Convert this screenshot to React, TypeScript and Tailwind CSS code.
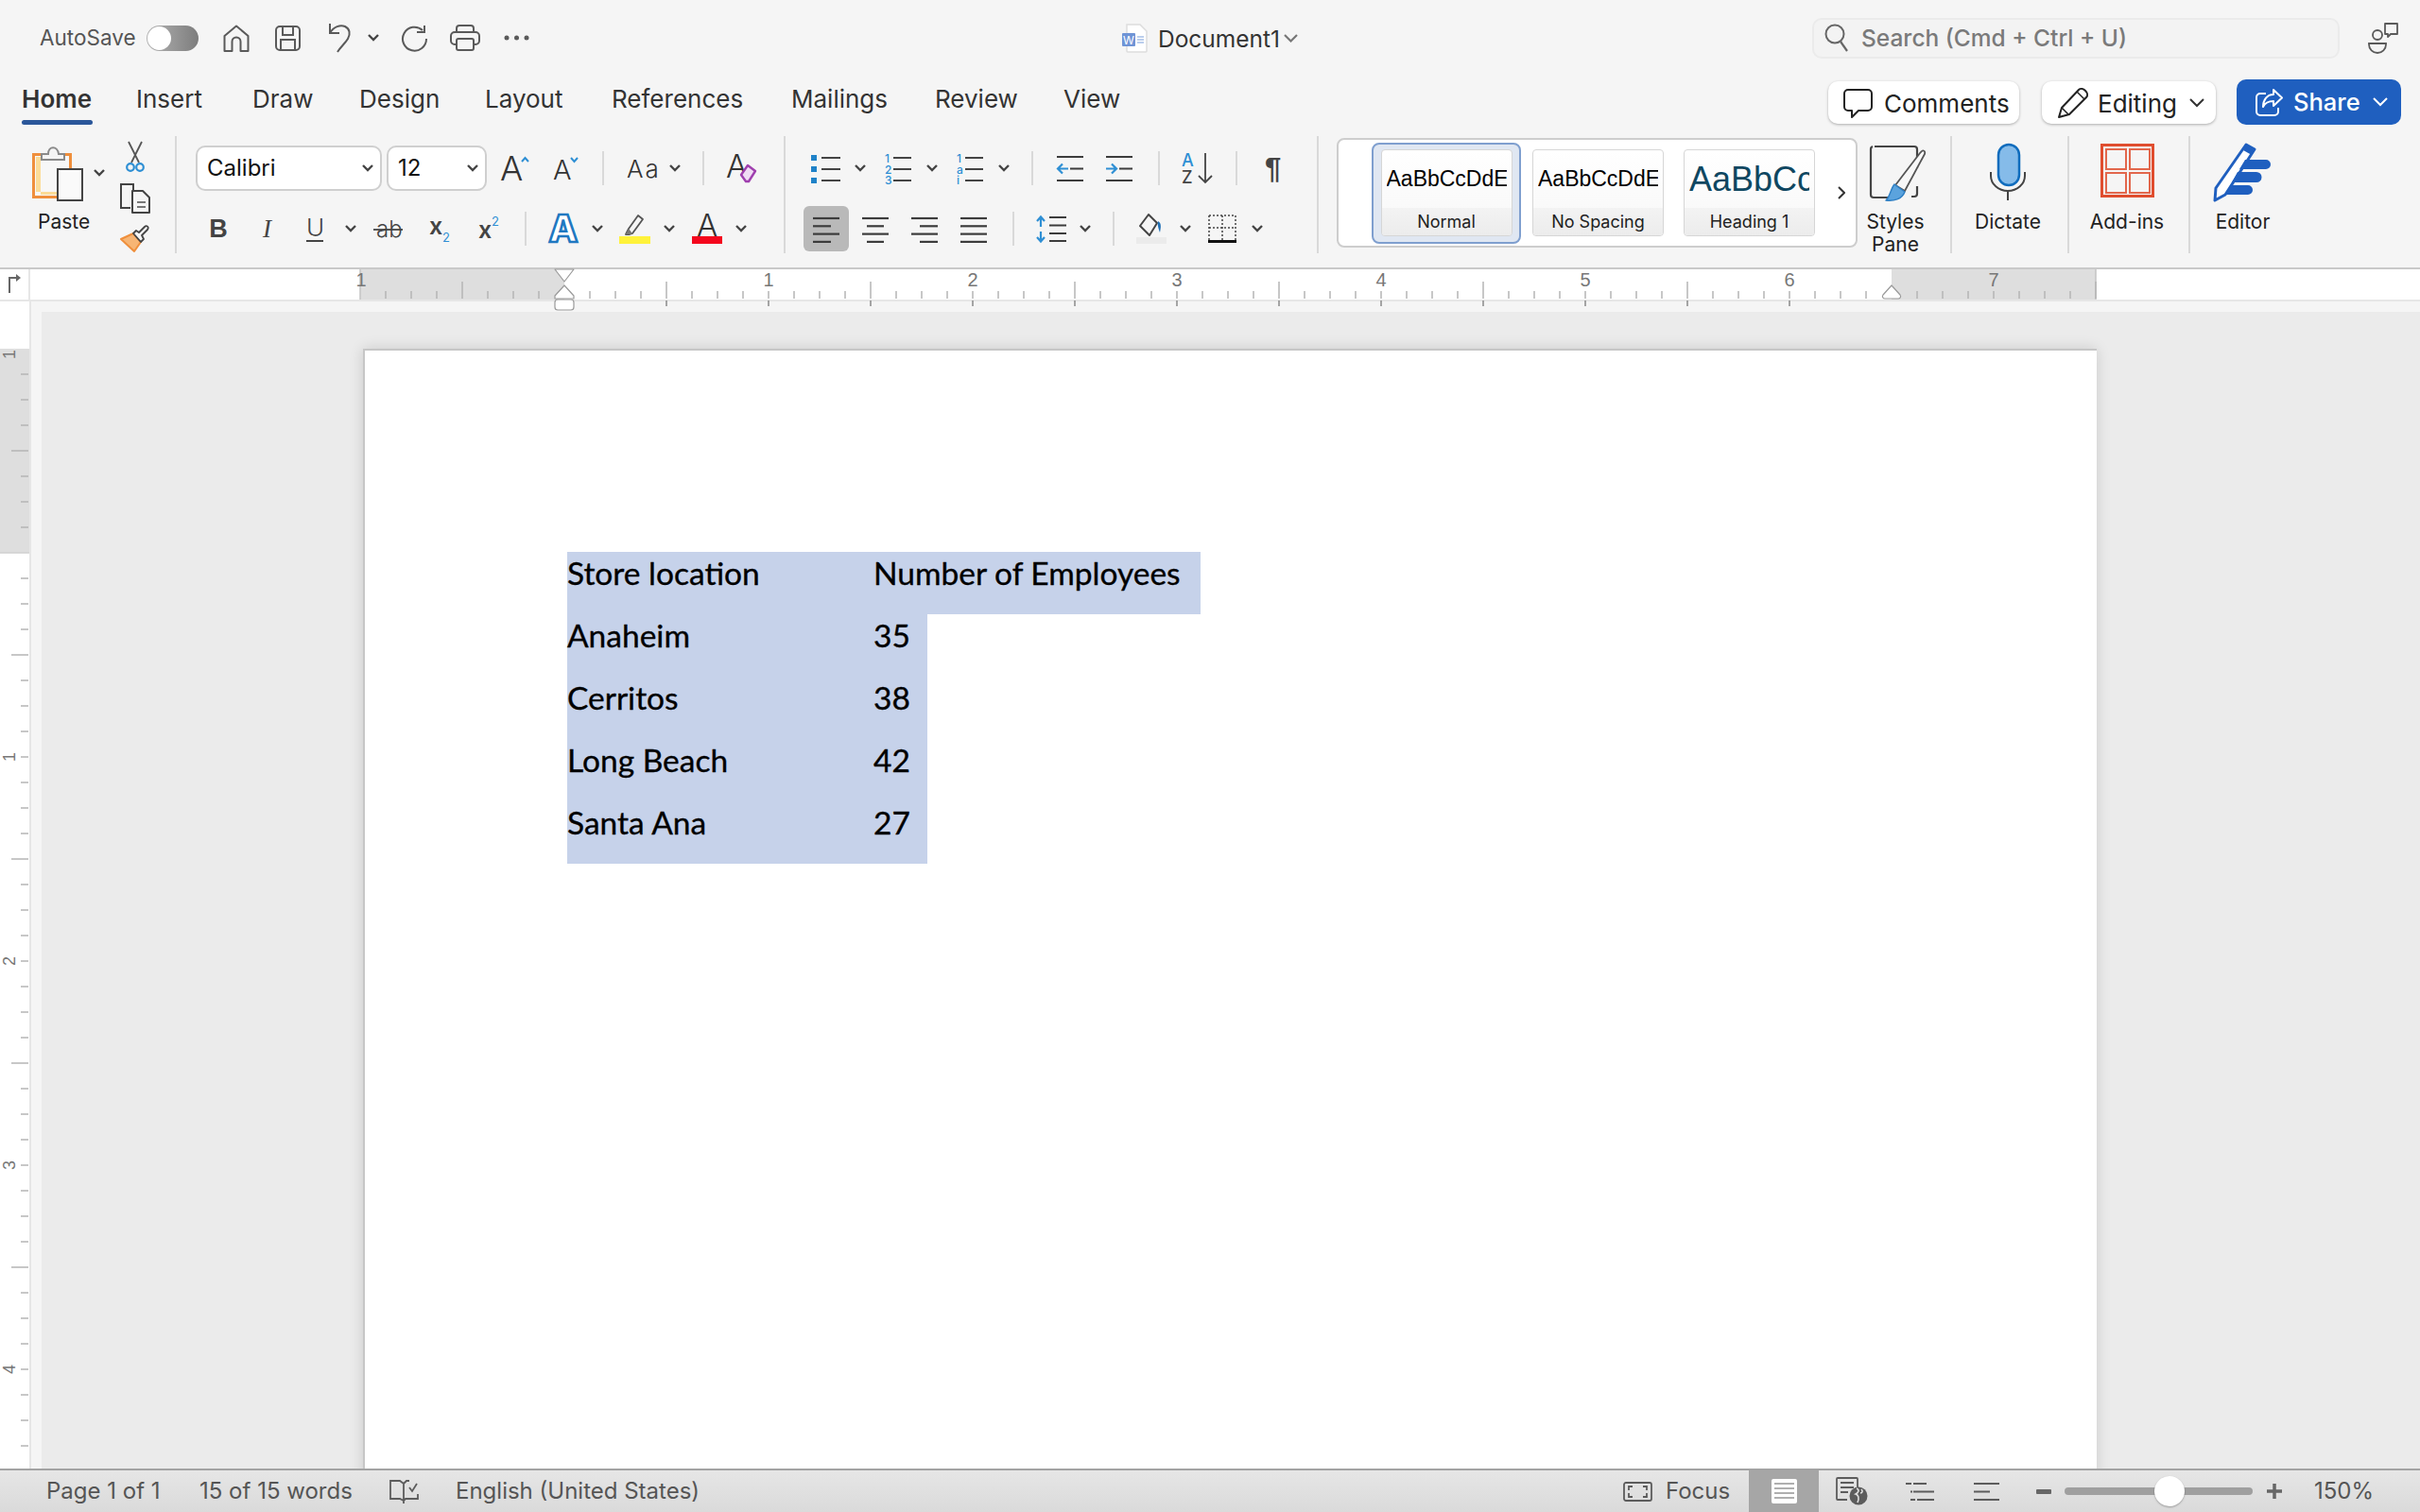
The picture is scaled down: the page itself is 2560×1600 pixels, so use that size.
import type { ReactNode } from "react";

const INK = "#444444";
const BLUE = "#2e8fd4";

function Chev({ className = "" }: { className?: string }) {
  return (
    <svg width="12" height="8" viewBox="0 0 12 8" className={`shrink-0 ${className}`} fill="none" stroke={INK} strokeWidth="2.4">
      <path d="M1 1l5 5 5-5" />
    </svg>
  );
}

function Sep({ className = "" }: { className?: string }) {
  return <div className={`w-[2px] h-[36px] bg-[#d9d9d9] shrink-0 ${className}`} />;
}

function GroupLine() {
  return <div className="w-[2px] h-[124px] bg-[#d9d9d9] shrink-0" />;
}

function Icon({ w, h, className = "", children }: { w: number; h: number; className?: string; children: ReactNode }) {
  return (
    <svg width={w} height={h} viewBox={`0 0 ${w} ${h}`} fill="none" className={`shrink-0 overflow-visible ${className}`}>
      {children}
    </svg>
  );
}

function AlignIcon({ rows, className = "" }: { rows: [number, number][]; className?: string }) {
  return (
    <Icon w={28} h={27} className={className}>
      {rows.map(([a, b], i) => (
        <path key={i} d={`M${a} ${2 + i * 8.3}H${b}`} stroke="#3c3c3c" strokeWidth="2.2" />
      ))}
    </Icon>
  );
}

function TitleBar() {
  const c = "#5a5a5a";
  return (
    <div className="h-[80px] flex items-center shrink-0">
      <span className="ml-[42px] w-[101px] text-[22.5px] text-[#555555] whitespace-nowrap">AutoSave</span>
      <div className="ml-[12px] w-[55px] h-[27px] rounded-full bg-gradient-to-r from-[#b5b5b5] to-[#7d7d7d] flex items-center shrink-0 pl-[1px]">
        <div className="w-[25px] h-[25px] rounded-full bg-white" />
      </div>
      <Icon w={28} h={29} className="ml-[26px]">
        <path d="M1.5 28V12L14 1.5 26.500 12V28H18.500V18a4.500 4.500 0 0 0-9 0V28Z" stroke={c} strokeWidth="2" strokeLinejoin="round" />
      </Icon>
      <Icon w={27} h={27} className="ml-[27px]">
        <path d="M1 5a4 4 0 0 1 4-4h17a4 4 0 0 1 4 4v17a4 4 0 0 1-4 4H5a4 4 0 0 1-4-4Z" stroke={c} strokeWidth="2" />
        <path d="M8 1v9h11V1M6 26V15h15v11" stroke={c} strokeWidth="2" />
      </Icon>
      <Icon w={25} h={32} className="ml-[29px]">
        <path d="M2 1v10h10" stroke={c} strokeWidth="2" />
        <path d="M2 11C6 4 13 2 18 4c5 2.500 6 8 3 13-3 5-8 9-11 14" stroke={c} strokeWidth="2" />
      </Icon>
      <Chev className="ml-[17px]" />
      <Icon w={30} h={27} className="ml-[22px]">
        <path d="M24 5A12.500 12.500 0 1 0 28 14" stroke={c} strokeWidth="2" />
        <path d="M26 0v7h-8" stroke={c} strokeWidth="2" />
      </Icon>
      <Icon w={32} h={28} className="ml-[23px]">
        <path d="M7 8V4a3 3 0 0 1 3-3h12a3 3 0 0 1 3 3v4" stroke={c} strokeWidth="2" />
        <path d="M7 21H5a4 4 0 0 1-4-4v-5a4 4 0 0 1 4-4h22a4 4 0 0 1 4 4v5a4 4 0 0 1-4 4h-2" stroke={c} strokeWidth="2" />
        <rect x="7" y="15" width="18" height="12" rx="2" stroke={c} strokeWidth="2" />
      </Icon>
      <Icon w={27} h={6} className="ml-[25px]">
        <circle cx="3" cy="3" r="2.500" fill={c} />
        <circle cx="13.500" cy="3" r="2.500" fill={c} />
        <circle cx="24" cy="3" r="2.500" fill={c} />
      </Icon>
      <Icon w={27} h={31} className="ml-[627px]">
        <path d="M5 1h14l7 7v21a1 1 0 0 1-1 1H6a1 1 0 0 1-1-1Z" fill="#ffffff" stroke="#dddddd" strokeWidth="1.500" />
        <rect x="0" y="10" width="14" height="14" rx="1" fill="#6f94d6" />
        <text x="7" y="21.500" textAnchor="middle" fontSize="12" fill="#ffffff">W</text>
        <path d="M16 14h7M16 17h7M16 20h7" stroke="#7ba0dc" strokeWidth="1.200" />
      </Icon>
      <span className="ml-[11px] mt-[2px] w-[125px] text-[24.5px] text-[#333333] whitespace-nowrap">Document1</span>
      <svg width="15" height="9" viewBox="0 0 15 9" fill="none" stroke="#777777" strokeWidth="2.200" className="ml-[8px] shrink-0">
        <path d="M1 1l6.500 6.500L14 1" />
      </svg>
      <div className="ml-[544px] w-[558px] h-[43px] rounded-[10px] bg-[#f3f3f3] border-2 border-[#ebebeb] flex items-center shrink-0">
        <Icon w={26} h={32} className="ml-[11px]">
          <circle cx="11" cy="12" r="9.500" stroke="#666666" strokeWidth="2" />
          <path d="M17 20l7 10" stroke="#666666" strokeWidth="2.200" />
        </Icon>
        <span className="ml-[13px] text-[24.5px] font-medium text-[#7a7a7a] whitespace-nowrap">Search (Cmd + Ctrl + U)</span>
      </div>
      <Icon w={33} h={32} className="ml-[29px]">
        <circle cx="11" cy="13" r="5" stroke={c} strokeWidth="1.800" />
        <path d="M2 22h18v1a9 9 0 0 1-18 0Z" stroke={c} strokeWidth="1.800" />
        <path d="M19 1h13v11h-7l-3 3v-3h-3Z" stroke={c} strokeWidth="1.800" strokeLinejoin="round" />
      </Icon>
    </div>
  );
}

const tabs = [
  { label: "Insert", cls: "ml-[46px] w-[71px]" },
  { label: "Draw", cls: "ml-[52px] w-[62px]" },
  { label: "Design", cls: "ml-[51px] w-[84px]" },
  { label: "Layout", cls: "ml-[49px] w-[82px]" },
  { label: "References", cls: "ml-[52px] w-[138px]" },
  { label: "Mailings", cls: "ml-[52px] w-[102px]" },
  { label: "Review", cls: "ml-[50px] w-[87px]" },
  { label: "View", cls: "ml-[49px] w-[59px]" },
];

function TabRow() {
  return (
    <div className="h-[54px] flex items-start shrink-0 text-[26px] text-[#333333]">
      <div className="ml-[23px] w-[75px] pt-[8px] flex flex-col">
        <span className="leading-[34px] font-semibold whitespace-nowrap">Home</span>
        <div className="mt-[5px] h-[5px] rounded-full bg-[#2b579a]" />
      </div>
      {tabs.map((t) => (
        <span key={t.label} className={`${t.cls} pt-[8px] leading-[34px] whitespace-nowrap`}>
          {t.label}
        </span>
      ))}
      <div className="ml-auto mr-[20px] flex items-center mt-[4px]">
        <div className="w-[202px] h-[45px] rounded-[10px] bg-white shadow-[0_1px_3px_rgba(0,0,0,0.3)] flex items-center pt-[2px]">
          <Icon w={31} h={31} className="ml-[16px]">
            <path d="M5 1h21a4 4 0 0 1 4 4v14a4 4 0 0 1-4 4H16l-7 7v-7H5a4 4 0 0 1-4-4V5a4 4 0 0 1 4-4Z" stroke="#222222" strokeWidth="2" strokeLinejoin="round" />
          </Icon>
          <span className="ml-[12px] text-[26px] text-[#222222] whitespace-nowrap">Comments</span>
        </div>
        <div className="ml-[24px] w-[184px] h-[45px] rounded-[10px] bg-white shadow-[0_1px_3px_rgba(0,0,0,0.3)] flex items-center pt-[2px]">
          <Icon w={32} h={32} className="ml-[17px]">
            <path d="M1 31l3-10L22 2c2-2 5-1 7 1s3 5 1 7L12 28Z" stroke="#222222" strokeWidth="2" strokeLinejoin="round" />
            <path d="M20 4l8 8M4 21l7 7" stroke="#222222" strokeWidth="1.500" />
          </Icon>
          <span className="ml-[10px] w-[82px] text-[26px] text-[#222222] whitespace-nowrap">Editing</span>
          <svg width="16" height="10" viewBox="0 0 16 10" fill="none" stroke="#333333" strokeWidth="2" className="ml-[15px]">
            <path d="M1 1l7 7 7-7" />
          </svg>
        </div>
        <div className="ml-[22px] w-[174px] h-[48px] rounded-[10px] bg-[#1f5fbf] flex items-center">
          <Icon w={29} h={29} className="ml-[20px]">
            <path d="M11 5H5a4 4 0 0 0-4 4v15a4 4 0 0 0 4 4h15a4 4 0 0 0 4-4v-4" stroke="#ffffff" strokeWidth="2" />
            <path d="M19 1l9 8.500-9 8.500v-5c-5 0-9 2-11 6 0-7 4-13 11-13Z" stroke="#ffffff" strokeWidth="2" strokeLinejoin="round" />
          </Icon>
          <span className="ml-[11px] w-[69px] text-[25.5px] font-medium text-white whitespace-nowrap">Share</span>
          <svg width="16" height="10" viewBox="0 0 16 10" fill="none" stroke="#ffffff" strokeWidth="2" className="ml-[15px]">
            <path d="M1 1l7 7 7-7" />
          </svg>
        </div>
      </div>
    </div>
  );
}

function Clipboard() {
  return (
    <div className="w-[185px] pt-[10px] flex items-start shrink-0">
      <div className="ml-[34px] w-[54px] flex flex-col shrink-0">
        <Icon w={54} h={59}>
          <rect x="1.500" y="9.500" width="39" height="45" fill="#f7f7f7" stroke="#ef8f3c" strokeWidth="3" />
          <path d="M4 12h5v40h18v-3H4Z" fill="#fbdc98" />
          <path d="M10 15V9h7c0-9 10-9 11 0h6v6Z" fill="#f5f5f5" stroke="#8a8a8a" strokeWidth="2" />
          <rect x="27" y="25" width="26" height="33" fill="#fafafa" stroke="#444444" strokeWidth="2" />
        </Icon>
        <span className="mt-[7px] ml-[6px] w-[54px] leading-[30px] text-center text-[21px] text-[#222222]">Paste</span>
      </div>
      <Chev className="ml-[11px] mt-[25px]" />
      <div className="ml-[16px] w-[32px] -mt-[4px] flex flex-col items-center shrink-0">
        <Icon w={20} h={32}>
          <path d="M3 0l11 22M17 0L6 22" stroke="#555555" strokeWidth="1.800" />
          <circle cx="5" cy="27" r="3.800" stroke={BLUE} strokeWidth="2.200" />
          <circle cx="15" cy="27" r="3.800" stroke={BLUE} strokeWidth="2.200" />
        </Icon>
        <Icon w={32} h={32} className="mt-[12px]">
          <path d="M11 26H1V1h13v6" stroke="#444444" strokeWidth="2" />
          <path d="M13 8h11l7 7v16H13Z" fill="#f5f5f5" stroke="#444444" strokeWidth="2" strokeLinejoin="round" />
          <path d="M18 20h9M18 25h9" stroke="#777777" strokeWidth="1.800" />
        </Icon>
        <Icon w={32} h={29} className="mt-[12px]">
          <path d="M1 15l13-6 8 9-7 10Z" fill="#f7b574" stroke="#ef8f3c" strokeWidth="2" strokeLinejoin="round" />
          <path d="M14 9l8 9 3-3-2-4 6-6c2-3-1-5-3-3l-6 6-3-2Z" fill="#f5f5f5" stroke="#444444" strokeWidth="1.800" strokeLinejoin="round" />
        </Icon>
      </div>
    </div>
  );
}

function FontGroup() {
  return (
    <div className="w-[642px] shrink-0">
      <div className="mt-[10px] h-[48px] flex items-center">
        <div className="ml-[20px] w-[197px] h-[48px] rounded-[10px] bg-white border-2 border-[#cfcfcf] flex items-center justify-between shrink-0">
          <span className="ml-[10px] text-[24px] text-[#111111]">Calibri</span>
          <Chev className="mr-[7px]" />
        </div>
        <div className="ml-[5px] w-[106px] h-[48px] rounded-[10px] bg-white border-2 border-[#cfcfcf] flex items-center justify-between shrink-0">
          <span className="ml-[10px] text-[24px] text-[#111111]">12</span>
          <Chev className="mr-[7px]" />
        </div>
        <Icon w={31} h={28} className="ml-[15px]">
          <text x="-1" y="27" fontSize="36" fontWeight="300" fill="#333333">A</text>
          <path d="M22 7l3.500-4 3.500 4" stroke={BLUE} strokeWidth="2" />
        </Icon>
        <Icon w={26} h={26} className="ml-[25px]">
          <text x="-1" y="25" fontSize="29" fontWeight="300" fill="#333333">A</text>
          <path d="M18 2l3.500 4L25 2" stroke={BLUE} strokeWidth="2" />
        </Icon>
        <Sep className="ml-[25px]" />
        <span className="ml-[24px] w-[33px] text-[26px] font-light tracking-[2px] text-[#333333] whitespace-nowrap">Aa</span>
        <Chev className="ml-[12px]" />
        <Sep className="ml-[23px]" />
        <Icon w={32} h={32} className="ml-[23px]">
          <text x="0" y="26" fontSize="34" fontWeight="300" fill="#333333">A</text>
          <path d="M21 30l-5-7 7-10 8 6-7 11Z" fill="#f0dcf4" stroke="#9f3fae" strokeWidth="2.400" strokeLinejoin="round" />
        </Icon>
      </div>
      <div className="mt-[16px] h-[48px] flex items-center">
        <span className="ml-[33px] w-[22px] text-[27px] font-bold leading-none text-center text-[#444444] shrink-0 [font-family:'Liberation_Sans',sans-serif]">B</span>
        <span className="ml-[34px] w-[13px] text-[27px] italic leading-none text-center text-[#444444] shrink-0 [font-family:'Liberation_Serif',serif]">I</span>
        <span className="ml-[35px] w-[18px] text-[26px] font-light leading-[26px] text-center text-[#444444] border-b-2 border-[#444444] shrink-0">U</span>
        <Chev className="ml-[23px]" />
        <Icon w={31} h={24} className="ml-[18px]">
          <text x="3" y="21" fontSize="24" fontWeight="300" fill="#444444">ab</text>
          <path d="M0 13H31" stroke="#444444" strokeWidth="1.800" />
        </Icon>
        <Icon w={22} h={30} className="ml-[28px]">
          <text x="0" y="21" fontSize="25" fontWeight="600" fill="#444444">x</text>
          <text x="14" y="29" fontSize="13" fill={BLUE}>2</text>
        </Icon>
        <Icon w={22} h={30} className="ml-[30px]">
          <text x="0" y="25" fontSize="25" fontWeight="600" fill="#444444">x</text>
          <text x="14" y="12" fontSize="13" fill={BLUE}>2</text>
        </Icon>
        <Sep className="ml-[27px]" />
        <Icon w={32} h={30} className="ml-[23px]">
          <text x="16" y="29" textAnchor="middle" fontSize="40" fontWeight="800" fill="#ffffff" stroke="#1f78c1" strokeWidth="2.600">A</text>
        </Icon>
        <Chev className="ml-[14px]" />
        <Icon w={33} h={32} className="ml-[17px]">
          <path d="M11 22l-4 0 3-6L20 2l5 4-11 15Z" fill="#f5f5f5" stroke="#555555" strokeWidth="1.800" strokeLinejoin="round" />
          <path d="M7 22l3-6 4 5-2 1Z" fill="#777777" />
          <rect x="0" y="24" width="33" height="8" fill="#fff23a" />
        </Icon>
        <Chev className="ml-[14px]" />
        <Icon w={32} h={32} className="ml-[18px]">
          <text x="16" y="24" textAnchor="middle" fontSize="33" fontWeight="300" fill="#333333">A</text>
          <rect x="0" y="24" width="32" height="8" fill="#f4061d" />
        </Icon>
        <Chev className="ml-[14px]" />
      </div>
    </div>
  );
}

function ListIcon({ marks }: { marks: string[] }) {
  return (
    <Icon w={30} h={31}>
      {marks.map((m, i) => (
        <text key={i} x="2" y={9 + i * 11.500} fontSize="12" fontWeight="500" fill={BLUE}>{m}</text>
      ))}
      {marks.map((_, i) => (
        <path key={i} d={`M11 ${4 + i * 12}H30`} stroke="#444444" strokeWidth="2" />
      ))}
    </Icon>
  );
}

function ParagraphGroup() {
  const ln = "#3c3c3c";
  return (
    <div className="w-[562px] shrink-0">
      <div className="mt-[10px] h-[48px] flex items-center">
        <Icon w={31} h={31} className="ml-[27px]">
          {[1, 13, 25].map((y) => (
            <rect key={y} x="0" y={y} width="6" height="6" fill="#1f82c8" />
          ))}
          {[4, 16, 28].map((y) => (
            <path key={y} d={`M11 ${y}H31`} stroke="#444444" strokeWidth="2" />
          ))}
        </Icon>
        <Chev className="ml-[15px]" />
        <div className="ml-[18px]">
          <ListIcon marks={["1", "2", "3"]} />
        </div>
        <Chev className="ml-[16px]" />
        <div className="ml-[18px]">
          <ListIcon marks={["1", "a", "i"]} />
        </div>
        <Chev className="ml-[16px]" />
        <Sep className="ml-[23px]" />
        <Icon w={28} h={29} className="ml-[25px]">
          <path d="M0 2H28M14 14.500H28M0 27H28" stroke={ln} strokeWidth="2.200" />
          <path d="M12 14.500H1M6 9.500L1 14.500l5 5" stroke={BLUE} strokeWidth="2.200" />
        </Icon>
        <Icon w={28} h={29} className="ml-[24px]">
          <path d="M0 2H28M14 14.500H28M0 27H28" stroke={ln} strokeWidth="2.200" />
          <path d="M0 14.500H11M6 9.500l5 5-5 5" stroke={BLUE} strokeWidth="2.200" />
        </Icon>
        <Sep className="ml-[27px]" />
        <Icon w={33} h={34} className="ml-[23px]">
          <text x="0" y="15" fontSize="18" fontWeight="500" fill={BLUE}>A</text>
          <text x="0" y="33" fontSize="18" fontWeight="500" fill="#444444">Z</text>
          <path d="M25 1V32M18 25l7 7 7-7" stroke="#444444" strokeWidth="1.800" />
        </Icon>
        <Sep className="ml-[24px]" />
        <span className="ml-[29px] w-[20px] text-[31px] font-bold leading-none text-[#444444] shrink-0 [font-family:'Liberation_Sans',sans-serif]">¶</span>
      </div>
      <div className="mt-[16px] h-[48px] flex items-center">
        <div className="ml-[19px] w-[48px] h-[48px] rounded-[6px] bg-[#b9b9b9] flex items-center justify-center shrink-0">
          <AlignIcon rows={[[0, 28], [0, 19], [0, 28], [0, 19]]} />
        </div>
        <AlignIcon className="ml-[14px]" rows={[[0, 28], [5, 23], [0, 28], [5, 23]]} />
        <AlignIcon className="ml-[24px]" rows={[[0, 28], [9, 28], [0, 28], [9, 28]]} />
        <AlignIcon className="ml-[24px]" rows={[[0, 28], [0, 28], [0, 28], [0, 28]]} />
        <Sep className="ml-[27px]" />
        <Icon w={32} h={29} className="ml-[23px]">
          <path d="M14 2H32M14 10.500H32M14 19H32M14 27H32" stroke={ln} strokeWidth="2.200" />
          <path d="M5 2V12M1 6l4-4.500L9 6M5 17V27M1 23l4 4.500 4-4.500" stroke={BLUE} strokeWidth="2.200" />
        </Icon>
        <Chev className="ml-[14px]" />
        <Sep className="ml-[23px]" />
        <Icon w={32} h={32} className="ml-[23px]">
          <path d="M13 1l-9 12 10 10 8-13Z" stroke="#444444" strokeWidth="2" strokeLinejoin="round" />
          <path d="M23 8c4 2 3 7 2 12-1-3-3-8-2-12Z" fill="#1f6fb5" />
          <rect x="0" y="25" width="32" height="7" fill="#ebebeb" />
        </Icon>
        <Chev className="ml-[14px]" />
        <Icon w={30} h={30} className="ml-[18px]">
          <path d="M1 1H29V27M1 1V27M15 1V27M1 14H29" stroke="#444444" strokeWidth="1.500" strokeDasharray="2 2" />
          <path d="M0 28.500H30" stroke="#111111" strokeWidth="3" />
        </Icon>
        <Chev className="ml-[16px]" />
      </div>
    </div>
  );
}

function StyleCard({ label, children }: { label: string; children: ReactNode }) {
  return (
    <div className="w-[139px] h-[92px] rounded-[4px] border border-[#d6d6d6] bg-gradient-to-b from-white to-[#f7f7f7] flex flex-col shrink-0">
      <div className="h-[61px] ml-[5px] w-[127px] flex items-center overflow-x-clip whitespace-nowrap [font-family:'Liberation_Sans',sans-serif]">
        {children}
      </div>
      <div className="flex-1 rounded-b-[3px] bg-gradient-to-b from-[#f3f3f3] to-[#ececec] flex items-center justify-center text-[18px] text-[#222222]">
        {label}
      </div>
    </div>
  );
}

function Styles() {
  return (
    <div className="w-[668px] flex items-start shrink-0">
      <div className="ml-[19px] mt-[2px] w-[551px] h-[116px] rounded-[8px] bg-white border-2 border-[#cdcdcd] flex items-center shrink-0">
        <div className="ml-[35px] w-[158px] h-[107px] rounded-[8px] border-2 border-[#7f9fcf] bg-[#e0e7f2] flex items-center justify-center shrink-0">
          <StyleCard label="Normal">
            <span className="text-[23px] text-black">AaBbCcDdEe</span>
          </StyleCard>
        </div>
        <div className="ml-[12px]">
          <StyleCard label="No Spacing">
            <span className="text-[23px] text-black">AaBbCcDdEe</span>
          </StyleCard>
        </div>
        <div className="ml-[21px]">
          <StyleCard label="Heading 1">
            <span className="text-[36px] text-[#0f4761]">AaBbCc</span>
          </StyleCard>
        </div>
        <svg width="8" height="14" viewBox="0 0 8 14" fill="none" stroke="#333333" strokeWidth="2" className="ml-[24px] shrink-0">
          <path d="M1 1l6 6-6 6" />
        </svg>
      </div>
      <div className="w-[80px] pt-[10px] flex flex-col shrink-0">
        <Icon w={61} h={59} className="ml-[12px]">
          <path d="M6 1h42a3 3 0 0 1 3 3v20M30 55H5a3 3 0 0 1-3-3V4a3 3 0 0 1 2-3" stroke="#444444" strokeWidth="2.200" />
          <path d="M45 54h3a3 3 0 0 0 3-3v-8" stroke="#444444" strokeWidth="2.200" />
          <path d="M28 42L54 8c3-4 6-3 5 1L38 48Z" fill="#f7f7f7" stroke="#555555" strokeWidth="1.800" strokeLinejoin="round" />
          <path d="M27 41l11 8c-3 8-12 10-20 9 4-3 5-12 9-17Z" fill="#5ba3dd" stroke="#2e7fc4" strokeWidth="1.500" strokeLinejoin="round" />
        </Icon>
        <span className="mt-[10px] leading-[24px] text-center text-[21px] text-[#222222]">Styles</span>
        <span className="leading-[24px] text-center text-[21px] text-[#222222]">Pane</span>
      </div>
    </div>
  );
}

function BigButton({ label, className, children }: { label: string; className: string; children: ReactNode }) {
  return (
    <div className={`pt-[8px] flex flex-col items-center shrink-0 ${className}`}>
      <div className="h-[62px] flex items-start">{children}</div>
      <span className="mt-[6px] leading-[30px] text-[21px] text-[#222222] whitespace-nowrap">{label}</span>
    </div>
  );
}

function Ruler() {
  const ticks: number[] = [];
  for (let n = -8; n <= 60; n++) ticks.push(n);
  const below: number[] = [];
  for (let x = 705; x <= 1893; x += 108) below.push(x);
  const labels: [string, number][] = [
    ["1", 813], ["2", 1029], ["3", 1245], ["4", 1461], ["5", 1677], ["6", 1893], ["7", 2109],
  ];
  return (
    <div className="h-[36px] shrink-0 border-y-2 border-t-[#c9c9c9] border-b-[#e6e6e6] bg-white relative z-10">
      <svg width="2560" height="32" viewBox="0 285 2560 32" fill="none" className="block overflow-visible">
        <rect x="381" y="285" width="216" height="32" fill="#dedede" />
        <rect x="2001" y="285" width="216" height="32" fill="#dedede" />
        <path d="M381 285V317M2217 285V317" stroke="#c4c4c4" strokeWidth="1.500" />
        <path d="M31 285V317" stroke="#e6e6e6" strokeWidth="2" />
        <path d="M10 310V294H17" stroke="#666666" strokeWidth="2" />
        <path d="M17 290l5 4-5 4Z" fill="#666666" />
        {ticks.map((n) => {
          const x = 597 + n * 27;
          if (n === 0 || n === 52 || n === -8) return null;
          const tall = ((n % 8) + 8) % 8 === 4;
          return <path key={n} d={`M${x} ${tall ? 298 : 308}V316`} stroke="#b5b5b5" strokeWidth="1.500" />;
        })}
        {below.map((x) => (
          <path key={x} d={`M${x} 318V324`} stroke="#888888" strokeWidth="1.500" />
        ))}
        <text x="382" y="303" textAnchor="middle" fontSize="20" fill="#777777" className="[font-family:'Liberation_Sans',sans-serif]">1</text>
        {labels.map(([t, x]) => (
          <text key={x} x={x} y="303" textAnchor="middle" fontSize="20" fill="#777777" className="[font-family:'Liberation_Sans',sans-serif]">{t}</text>
        ))}
        <path d="M587 285h20l-10 13Z" fill="#ffffff" stroke="#999999" strokeWidth="1.200" strokeLinejoin="round" />
        <path d="M597 302l10 11v3H587v-3Z" fill="#ffffff" stroke="#999999" strokeWidth="1.200" strokeLinejoin="round" />
        <rect x="587" y="317" width="20" height="11" rx="3" fill="#ffffff" stroke="#999999" strokeWidth="1.200" />
        <path d="M2001 302l9 10c1.500 2 0 4-2 4h-14c-2 0-3.500-2-2-4Z" fill="#ffffff" stroke="#999999" strokeWidth="1.200" strokeLinejoin="round" />
      </svg>
    </div>
  );
}

function SideRuler() {
  const ticks: number[] = [];
  for (let n = -8; n <= 36; n++) ticks.push(n);
  const nums: [string, number][] = [["1", 801], ["2", 1017], ["3", 1233], ["4", 1449]];
  return (
    <svg width="31" height="1235" viewBox="0 319 31 1235" fill="none" className="block shrink-0 bg-white">
      <rect x="0" y="369" width="31" height="216" fill="#dedede" />
      <path d="M0 585H31" stroke="#cfcfcf" strokeWidth="1.500" />
      {ticks.map((n) => {
        const y = 585 + n * 27;
        if (n === 0 || n === -8) return null;
        const tall = ((n % 8) + 8) % 8 === 4;
        return <path key={n} d={`M${tall ? 12 : 22} ${y}H30`} stroke="#b5b5b5" strokeWidth="1.500" />;
      })}
      <text x="10" y="369" textAnchor="middle" fontSize="18" fill="#777777" transform="rotate(-90 10 369) translate(-6 6)" className="[font-family:'Liberation_Sans',sans-serif]">1</text>
      {nums.map(([t, y]) => (
        <text key={y} x="10" y={y} textAnchor="middle" fontSize="18" fill="#777777" transform={`rotate(-90 10 ${y}) translate(0 6)`} className="[font-family:'Liberation_Sans',sans-serif]">{t}</text>
      ))}
    </svg>
  );
}

const rows = [
  { a: "Anaheim", b: "35", h: "h-[66px]" },
  { a: "Cerritos", b: "38", h: "h-[66px]" },
  { a: "Long Beach", b: "42", h: "h-[66px]" },
  { a: "Santa Ana", b: "27", h: "h-[66px]" },
];

function Page() {
  return (
    <div className="w-[1834px] h-[1300px] bg-white border-t-2 border-l-2 border-[#c6c6c6] shadow-[0_0_14px_rgba(0,0,0,0.14)] pt-[213px] pl-[214px] [font-family:Lato,sans-serif] text-[33.5px] [-webkit-text-stroke:0.35px_black] text-black shrink-0">
      <div className="h-[66px] w-[670px] bg-[#c6d2ea] flex">
        <span className="w-[324px] leading-[44px] whitespace-nowrap">Store location</span>
        <span className="leading-[44px] whitespace-nowrap">Number of Employees</span>
      </div>
      {rows.map((r) => (
        <div key={r.a} className={`${r.h} w-[381px] bg-[#c6d2ea] flex`}>
          <span className="w-[324px] leading-[44px] whitespace-nowrap">{r.a}</span>
          <span className="leading-[44px] whitespace-nowrap">{r.b}</span>
        </div>
      ))}
    </div>
  );
}

function StatusBar() {
  const c = "#5c5c5c";
  return (
    <div className="h-[46px] shrink-0 border-t-2 border-[#a3a3a3] bg-gradient-to-b from-[#e6e6e6] to-[#dadada] flex items-center text-[24px] text-[#555555] relative z-10">
      <span className="ml-[49px] w-[119px] whitespace-nowrap">Page 1 of 1</span>
      <span className="ml-[43px] w-[161px] whitespace-nowrap">15 of 15 words</span>
      <Icon w={31} h={25} className="ml-[40px]">
        <path d="M1 1h10l4 3v18l-4-2H1ZM15 4l3-3h3M15 22l2-2h13v-5M15 22v3" stroke={c} strokeWidth="1.800" />
        <path d="M21 8l3 4 5-8" stroke={c} strokeWidth="1.800" />
      </Icon>
      <span className="ml-[39px] w-[256px] whitespace-nowrap">English (United States)</span>
      <Icon w={31} h={21} className="ml-[979px]">
        <rect x="1" y="1" width="29" height="19" rx="2" stroke={c} strokeWidth="1.800" />
        <path d="M6 9V5h4M21 5h4v4M25 12v4h-4M10 16H6v-4" stroke={c} strokeWidth="1.800" />
      </Icon>
      <span className="ml-[14px] w-[67px] whitespace-nowrap">Focus</span>
      <div className="ml-[21px] w-[74px] self-stretch bg-[#a6a6a6] flex items-center justify-center shrink-0">
        <Icon w={27} h={26}>
          <rect x="0" y="0" width="27" height="26" rx="2" fill="#ffffff" />
          {[4, 9, 14, 19].map((y) => (
            <path key={y} d={`M3 ${y + 1}H24`} stroke="#a6a6a6" strokeWidth="1.800" />
          ))}
        </Icon>
      </div>
      <Icon w={34} h={30} className="ml-[18px]">
        <path d="M1 23V2a1 1 0 0 1 1-1h20a1 1 0 0 1 1 1v10M1 23a1 1 0 0 0 1 1h10" stroke={c} strokeWidth="1.800" />
        <path d="M5 6h14M5 11h14M5 16h8" stroke={c} strokeWidth="1.800" />
        <circle cx="24" cy="20" r="9.500" fill={c} />
        <path d="M22 12c4 2 1 5-1 6 3 1 4 4 2 9M27 13c2 2 1 4-1 4" stroke="#e0e0e0" strokeWidth="1.600" />
      </Icon>
      <Icon w={30} h={21} className="ml-[40px]">
        <path d="M0 2H6M8 2H22M8 10.500H30M12 19H30M5 10.500H7M5 19H10" stroke={c} strokeWidth="2" />
      </Icon>
      <Icon w={27} h={21} className="ml-[42px]">
        <path d="M0 2H27M0 10.500H17M0 19H27" stroke={c} strokeWidth="2.200" />
      </Icon>
      <div className="ml-[39px] w-[16px] h-[5px] bg-[#666666] rounded-[1px] shrink-0" />
      <div className="ml-[14px] w-[199px] h-[8px] rounded-full bg-[#9f9f9f] relative shrink-0">
        <div className="absolute left-[95px] -top-[12px] w-[32px] h-[32px] rounded-full bg-white shadow-[0_1px_2px_rgba(0,0,0,0.3)]" />
      </div>
      <Icon w={16} h={16} className="ml-[15px]">
        <path d="M0 8H16M8 0V16" stroke="#666666" strokeWidth="3.500" />
      </Icon>
      <span className="ml-[34px] whitespace-nowrap">150%</span>
    </div>
  );
}

export default function App() {
  return (
    <div className="w-[2560px] h-[1600px] flex flex-col overflow-hidden bg-[#f5f5f5] [font-family:Inter,sans-serif]">
      <TitleBar />
      <TabRow />
      <div className="h-[149px] pt-[10px] flex items-start shrink-0">
        <Clipboard />
        <GroupLine />
        <FontGroup />
        <GroupLine />
        <ParagraphGroup />
        <GroupLine />
        <Styles />
        <GroupLine />
        <BigButton label="Dictate" className="w-[118px] mr-[4px]">
          <Icon w={38} h={60}>
            <rect x="9" y="1" width="22" height="43" rx="11" fill="#85bbe9" stroke="#0f6cbd" strokeWidth="2.500" />
            <path d="M1 30v4a18 16 0 0 0 36 0v-4M19 50V60" stroke="#444444" strokeWidth="2" />
          </Icon>
        </BigButton>
        <GroupLine />
        <BigButton label="Add-ins" className="w-[122px] mr-[4px]">
          <Icon w={57} h={57}>
            <rect x="1.500" y="1.500" width="54" height="54" stroke="#e04e2f" strokeWidth="3" />
            <rect x="6" y="6" width="21" height="21" stroke="#e2674c" strokeWidth="2" />
            <rect x="31" y="6" width="21" height="21" stroke="#e2674c" strokeWidth="2" />
            <rect x="6" y="31" width="21" height="21" stroke="#e2674c" strokeWidth="2" />
            <rect x="31" y="31" width="21" height="21" stroke="#e2674c" strokeWidth="2" />
          </Icon>
        </BigButton>
        <GroupLine />
        <BigButton label="Editor" className="ml-[25px] w-[61px]">
          <Icon w={61} h={61}>
            <path d="M34 1l9 5L12 54 1 60l1-13Z" fill="#ffffff" stroke="#1f5fbf" strokeWidth="3" strokeLinejoin="round" />
            <path d="M34 1l9 5-3 6-9-5Z" fill="#1f5fbf" />
            <path d="M33 17h22a5 5 0 0 1 0 10H27ZM25 30h20a5.500 5.500 0 0 1 0 11H19ZM18 44h18a5 5 0 0 1 0 10H12Z" fill="#1f5fbf" />
          </Icon>
        </BigButton>
      </div>
      <Ruler />
      <div className="flex-1 min-h-0 flex overflow-hidden">
        <SideRuler />
        <div className="w-[13px] bg-[#f5f5f5] border-l-2 border-[#e6e6e6] shrink-0" />
        <div className="flex-1 flex flex-col min-w-0">
          <div className="h-[11px] bg-[#f5f5f5] shrink-0" />
          <div className="flex-1 bg-[#ebebeb] pl-[340px] pt-[39px] overflow-hidden">
            <Page />
          </div>
        </div>
      </div>
      <StatusBar />
    </div>
  );
}
